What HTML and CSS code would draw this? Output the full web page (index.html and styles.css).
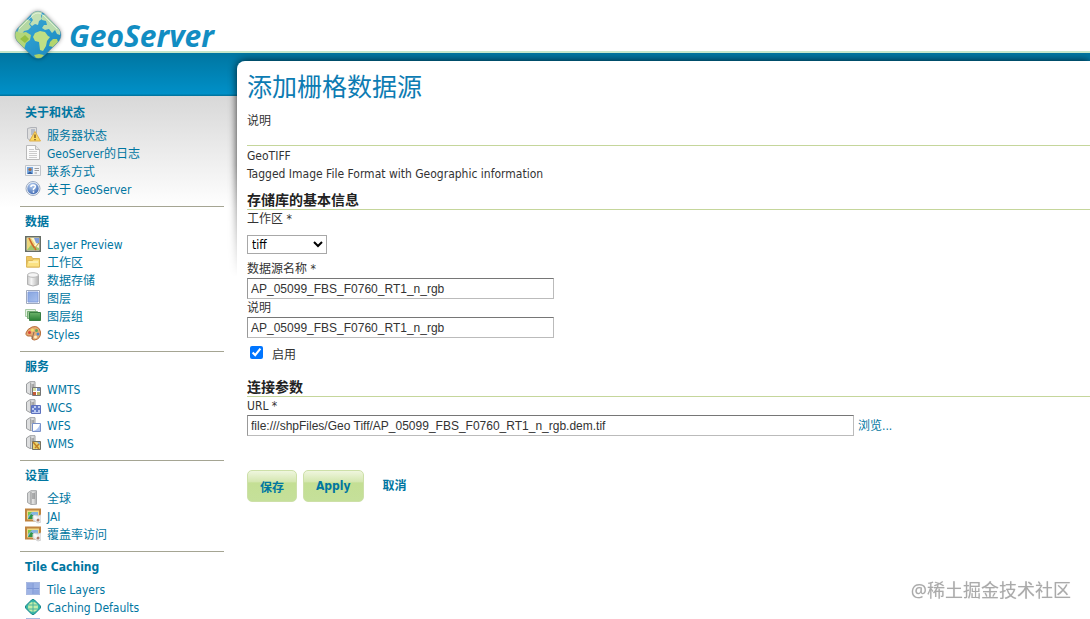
FILE: index.html
```html
<!DOCTYPE html>
<html lang="zh-CN">
<head>
<meta charset="utf-8">
<title>GeoServer</title>
<link rel="stylesheet" href="styles.css">
</head>
<body>
<svg class="sprite" aria-hidden="true">
  <defs>
    <linearGradient id="g-metal" x1="0" x2="1" y1="0" y2="0"><stop offset="0" stop-color="#8e9091"/><stop offset=".4" stop-color="#e9e9e9"/><stop offset="1" stop-color="#b4b5b6"/></linearGradient>
    <linearGradient id="g-cyl" x1="0" x2="1" y1="0" y2="0"><stop offset="0" stop-color="#c6c6c6"/><stop offset=".35" stop-color="#f6f6f6"/><stop offset="1" stop-color="#b2b2b2"/></linearGradient>
    <linearGradient id="g-blue" x1="0" x2="1" y1="0" y2="1"><stop offset="0" stop-color="#86a5e0"/><stop offset="1" stop-color="#a9c0ee"/></linearGradient>
    <linearGradient id="g-green" x1="0" x2="0" y1="0" y2="1"><stop offset="0" stop-color="#6db46b"/><stop offset="1" stop-color="#297f35"/></linearGradient>
    <linearGradient id="g-sea" x1="0" x2="1" y1="0" y2="1"><stop offset="0" stop-color="#53a9cc"/><stop offset=".5" stop-color="#2a9bcf"/><stop offset="1" stop-color="#1782b9"/></linearGradient>
    <radialGradient id="g-help" cx=".4" cy=".25" r=".8"><stop offset="0" stop-color="#b9d0f1"/><stop offset="1" stop-color="#3d68b1"/></radialGradient>
    <clipPath id="c-logo"><path d="M20 4.500Q26 0 32 4.500L47 20Q51 26 47 32L32 47Q26 52 20 47L5 32Q1 26 5 20Z"/></clipPath>
  </defs>
  <symbol id="i-server" viewBox="0 0 16 16"><path d="M2.500 3 6 .7h5.500v13.500L6 14.500l-3.500-2Z" fill="#d4d5d5" stroke="#a6a8aa"/><path d="M5.500 2 11 1.500v12.500l-5.500-.3Z" fill="url(#g-metal)"/><path d="M7 4h3M7 6h3M7 8h3" stroke="#77797b"/></symbol>
  <symbol id="i-status" viewBox="0 0 16 16"><path d="M2.500 1.500 6 .5h5.500v12l-6 1-3-2Z" fill="#dedede" stroke="#b0b2b8"/><path d="M6 3h4M6 5h4M6 7h4" stroke="#8a99b4"/><path d="m10 4.500 5.500 9.500h-11Z" fill="#fcd95f" stroke="#dfae4a"/><path d="M10 7.500v3.500M10 12v1.300" stroke="#704b1b" stroke-width="1.300"/></symbol>
  <symbol id="i-page" viewBox="0 0 16 16"><path d="M1.500.5h9l4 4v10h-13Z" fill="#fbfbfb" stroke="#b9b9b9"/><path d="M10.500.5v4h4" fill="#e5e5e5" stroke="#b9b9b9"/><path d="M4 4.500h5M4 6.500h8M4 8.500h8M4 10.500h8M4 12.500h8" stroke="#cbcbcb"/></symbol>
  <symbol id="i-card" viewBox="0 0 16 16"><path d="M.5 2.500h15v10H.5Z" fill="#f3f5f8" stroke="#c1c5ca"/><path d="M2 4h6v7H2Z" fill="#79a9df"/><circle cx="5" cy="6.500" r="1.600" fill="#a56b42"/><path d="M2.500 11q2.500-5 5 0Z" fill="#345f9e"/><path d="M9.500 5.500H14M9.500 7.500H14M9.500 10H12" stroke="#9a9da1"/></symbol>
  <symbol id="i-help" viewBox="0 0 16 16"><circle cx="8" cy="7.500" r="7" fill="#ecf1f8" stroke="#9eacc2"/><circle cx="8" cy="7.500" r="5.700" fill="url(#g-help)"/><path d="M5.900 6q0-2 2.200-2t2.200 1.800Q10.300 7 8.500 8v1.300M8.500 10.300v1.500" fill="none" stroke="#fff" stroke-width="1.500"/></symbol>
  <symbol id="i-map" viewBox="0 0 16 16"><path d="M.8.800h14.400v14.400H.8Z" fill="#fff7ca" stroke="#666d65" stroke-width="1.600"/><path d="M2 2h4l4 6-3 6H2Z" fill="#edd77c"/><path d="M9 2h5v6l-3-1Z" fill="#7e9ddb"/><path d="m2 14 4-5 8 3v2Z" fill="#9fc76a"/><path d="m4 2 3 6 4 6" fill="none" stroke="#cf6728" stroke-width="1.600"/><path d="m14 7-5 6" stroke="#be9742"/></symbol>
  <symbol id="i-folder" viewBox="0 0 16 16"><path d="M1.500 13V2.500h5l1 2h7V13Z" fill="#f0c65e" stroke="#d9b35a"/><path d="M1.500 13 2.500 6.500h5l1-1.500h6v8Z" fill="#fbe283" stroke="#ddb757"/><path d="M4 8h9" stroke="#fff9d9"/></symbol>
  <symbol id="i-db" viewBox="0 0 16 16"><path d="M2.500 3v9.500q5.500 3 11 0V3Z" fill="url(#g-cyl)" stroke="#b1b1b1"/><ellipse cx="8" cy="3" rx="5.500" ry="2.300" fill="#f5f5f5" stroke="#b9b9b9"/></symbol>
  <symbol id="i-layer" viewBox="0 0 16 16"><path d="M1.500.500h13v13h-13Z" fill="#fff" stroke="#9fa9bd"/><path d="M3 2h10v10H3Z" fill="url(#g-blue)" stroke="#819cdc"/></symbol>
  <symbol id="i-group" viewBox="0 0 16 16"><path d="M.5 1.500h10v7H.5Z" fill="#e2f0df" stroke="#a9cba6"/><path d="M2.500 3.500h10v7h-10Z" fill="#a0cb9c" stroke="#77ad75"/><path d="M4.500 4.500h11v8h-11Z" fill="url(#g-green)" stroke="#397e42"/></symbol>
  <symbol id="i-palette" viewBox="0 0 16 16"><path d="M7 1q7-2 8.500 5 .5 7-6 8-3 .2-2.500-2.500.5-2-2-1.500-4.500.5-4-3Q2 3 7 1Z" fill="#e5aa71" stroke="#b76d3a"/><circle cx="4.500" cy="6.500" r="1.500" fill="#d94637"/><circle cx="7.500" cy="4" r="1.500" fill="#f7e06b"/><circle cx="11.500" cy="4.500" r="1.500" fill="#65ad59"/><circle cx="13" cy="8" r="1.500" fill="#4d87cd"/><circle cx="10.500" cy="11" r="1.500" fill="#fff0c4"/><path d="m7 13 2-7" stroke="#8b6d59"/></symbol>
  <symbol id="i-svc" viewBox="0 0 16 16"><path d="M1.500 3 5 .7h5V13.500H5l-3.500-2Z" fill="#dedfe0" stroke="#9b9d9f"/><path d="M5 1.500h5v12H5Z" fill="url(#g-metal)"/><path d="M6.500 4H9M6.500 6H9" stroke="#777"/></symbol>
  <symbol id="i-wmts" viewBox="0 0 16 16"><use href="#i-svc"/><path d="M7.500 6.500h8v8h-8Z" fill="#fff" stroke="#757575"/><path d="M8 7h3v3H8Z" fill="#d4dfa4"/><path d="M12 7h3v3h-3Z" fill="#789ace"/><path d="M8 11h3v3H8Z" fill="#c45a36"/><path d="M12 11h3v3h-3Z" fill="#b8b466"/></symbol>
  <symbol id="i-wcs" viewBox="0 0 16 16"><use href="#i-svc"/><path d="M6.500 6.500h9v8h-9Z" fill="#bccbf1" stroke="#5d71be"/><path d="M7 7h2v2h2V7h2v2h2v2h-2v2h-2v-2H9v2H7v-2h2V9H7Z" fill="#637bc9"/></symbol>
  <symbol id="i-wfs" viewBox="0 0 16 16"><use href="#i-svc"/><path d="M7.500 6.500h8v8h-8Z" fill="#fff" stroke="#7990c8"/><path d="M8 14q5-1 7-7v7Z" fill="#adc3ef"/></symbol>
  <symbol id="i-wms" viewBox="0 0 16 16"><use href="#i-svc"/><path d="M7.500 6.500h8v8h-8Z" fill="#ecd574" stroke="#727165"/><path d="m8 7 6 7M15 8l-5 5" stroke="#c18224" stroke-width="1.500"/><path d="M12 7h3v3Z" fill="#86a9d8"/></symbol>
  <symbol id="i-jai" viewBox="0 0 16 16"><path d="M1 1.500h14v11H1Z" fill="#efd985" stroke="#c08440" stroke-width="2"/><path d="M3 4h10v7H3Z" fill="#86b6df"/><path d="m3 11 3-5 3 2 4 3Z" fill="#319549"/><path d="M3 4h4L3 8Z" fill="#78c84b"/><path d="m8 8 3-1 2 1 3-1v7l-3 1-5-3Z" fill="#eee" stroke="#d0d0d0"/><circle cx="13" cy="12" r="1.500" fill="#ad7966"/><path d="m9 8 3 3" stroke="#f8f8f8" stroke-width="2"/></symbol>
  <symbol id="i-tiles" viewBox="0 0 16 16"><path d="M1 1h14v13H1Z" fill="#9fb4e5"/><path d="M1 1h6v6H1ZM9 9h6v5H9Z" fill="#93aae0"/><path d="M8 1v13M1 7.500h14" stroke="#7c95d3"/><path d="M1.500 1.500h13v12h-13Z" fill="none" stroke="#a9b9e1"/></symbol>
  <symbol id="i-cache" viewBox="0 0 16 16"><path d="M6.500 1Q8-.3 9.500 1L15 6.500Q16.300 8 15 9.500L9.500 15Q8 16.300 6.500 15L1 9.500Q-.3 8 1 6.500Z" fill="#39b7a5" stroke="#15858c"/><circle cx="8" cy="8" r="5" fill="#c5edaa"/><path d="M8 3v10M3.500 6h9M3.500 10h9" stroke="#4bb29b"/></symbol>
</svg>

<header class="header">
  <a class="brand" href="#">
    <svg class="brand-mark" viewBox="0 0 52 52" aria-hidden="true">
      <g clip-path="url(#c-logo)">
        <path d="M0 0h52v52H0Z" fill="url(#g-sea)"/>
        <path d="m20 3 5-2 5 2-1 4 1 3-3 2-1 4-3-1-3 2-2-2 3-4-2-3Z" fill="#c3e0b4"/>
        <path d="m9 13 5-3 5 2-2 3 2 3-3 3-4 1-2 3-5-1Z" fill="#b5d8a2"/>
        <path d="m3 22 6 2 5-1 5 3-1 5-4 3-2 6L2 29Z" fill="#b3d67a"/>
        <path d="m8 30 5-4 4 4-4 4Z" fill="#94c043"/>
        <path d="m30 6 5-1 14 15-1 6-3-1-2-4-3 3-3-4-4 1-3-2 2-3 3 0-1-4-4-1Z" fill="#b9dcae"/>
        <path d="m23 24 5-2 5 1 3 4 2 1-3 4-1 5-3 5-3-1-1-8-4-1-2-4Z" fill="#bfdf85"/>
        <path d="m38 33 3-3 4 0 1 3-5 5-4-1Z" fill="#b3d56f"/>
        <path d="m22 46 5-1 5 1-3 4-5-1Z" fill="#abd067"/>
      </g>
      <path d="M20 4.500Q26 0 32 4.500L47 20Q51 26 47 32L32 47Q26 52 20 47L5 32Q1 26 5 20Z" fill="none" stroke="#426f7d" stroke-opacity=".25"/>
      <path d="M7 20 21 6q5-4 10 0l14 14" fill="none" stroke="#fff" stroke-opacity=".5"/>
    </svg>
    <span class="brand-name">GeoServer</span>
  </a>
</header>

<div class="layout">
  <nav class="sidebar">
    <section class="group">
      <h3>关于和状态</h3>
      <ul>
        <li><a href="#"><svg><use href="#i-status"/></svg>服务器状态</a></li>
        <li><a href="#"><svg><use href="#i-page"/></svg>GeoServer的日志</a></li>
        <li><a href="#"><svg><use href="#i-card"/></svg>联系方式</a></li>
        <li><a href="#"><svg><use href="#i-help"/></svg>关于 GeoServer</a></li>
      </ul>
    </section>
    <section class="group">
      <h3>数据</h3>
      <ul>
        <li><a href="#"><svg><use href="#i-map"/></svg>Layer Preview</a></li>
        <li><a href="#"><svg><use href="#i-folder"/></svg>工作区</a></li>
        <li><a href="#"><svg><use href="#i-db"/></svg>数据存储</a></li>
        <li><a href="#"><svg><use href="#i-layer"/></svg>图层</a></li>
        <li><a href="#"><svg><use href="#i-group"/></svg>图层组</a></li>
        <li><a href="#"><svg><use href="#i-palette"/></svg>Styles</a></li>
      </ul>
    </section>
    <section class="group">
      <h3>服务</h3>
      <ul>
        <li><a href="#"><svg><use href="#i-wmts"/></svg>WMTS</a></li>
        <li><a href="#"><svg><use href="#i-wcs"/></svg>WCS</a></li>
        <li><a href="#"><svg><use href="#i-wfs"/></svg>WFS</a></li>
        <li><a href="#"><svg><use href="#i-wms"/></svg>WMS</a></li>
      </ul>
    </section>
    <section class="group">
      <h3>设置</h3>
      <ul>
        <li><a href="#"><svg><use href="#i-server"/></svg>全球</a></li>
        <li><a href="#"><svg><use href="#i-jai"/></svg>JAI</a></li>
        <li><a href="#"><svg><use href="#i-jai"/></svg>覆盖率访问</a></li>
      </ul>
    </section>
    <section class="group">
      <h3>Tile Caching</h3>
      <ul>
        <li><a href="#"><svg><use href="#i-tiles"/></svg>Tile Layers</a></li>
        <li><a href="#"><svg><use href="#i-cache"/></svg>Caching Defaults</a></li>
        <li><a href="#"><svg><use href="#i-tiles"/></svg></a></li>
      </ul>
    </section>
  </nav>

  <main class="main">
    <div class="shade" aria-hidden="true"><div class="shade-edge"></div></div>
    <div class="content">
      <div class="page-header">
        <h1>添加栅格数据源</h1>
        <p>说明</p>
      </div>
      <p>GeoTIFF</p>
      <p>Tagged Image File Format with Geographic information</p>
      <form>
        <h2>存储库的基本信息</h2>
        <label class="caption" for="workspace">工作区 *</label>
        <select id="workspace" class="workspace"><option>tiff</option></select>
        <label class="caption" for="name">数据源名称 *</label>
        <input id="name" class="text" type="text" value="AP_05099_FBS_F0760_RT1_n_rgb">
        <label class="caption" for="description">说明</label>
        <input id="description" class="text" type="text" value="AP_05099_FBS_F0760_RT1_n_rgb">
        <div class="check"><input id="enabled" type="checkbox" checked><label for="enabled">启用</label></div>
        <h2>连接参数</h2>
        <label class="caption" for="url">URL *</label>
        <div class="url-row">
          <input id="url" class="text text-wide" type="text" value="file:///shpFiles/Geo Tiff/AP_05099_FBS_F0760_RT1_n_rgb.dem.tif">
          <a href="#">浏览...</a>
        </div>
        <div class="actions">
          <button class="button" type="button">保存</button>
          <button class="button" type="button">Apply</button>
          <a class="cancel" href="#">取消</a>
        </div>
      </form>
    </div>
  </main>
</div>
<div class="watermark">@稀土掘金技术社区</div>
</body>
</html>
```
FILE: styles.css
```css
* { box-sizing: border-box; }

body {
  margin: 0;
  height: 100vh;
  overflow: hidden;
  display: flex;
  flex-direction: column;
  background: #fff;
  color: #333;
  font: 12px/18px "DejaVu Sans Condensed", "Open Sans", "Noto Sans CJK SC", sans-serif;
}

h1, h2, h3, p, ul { margin: 0; padding: 0; }
ul { list-style: none; }
a { color: #0076a1; text-decoration: none; }

.sprite { position: absolute; width: 0; height: 0; }

.header {
  height: 53px;
  flex: none;
  padding: 9px 12px 0;
  border-bottom: 2px solid #c5e6c9;
  position: relative;
  z-index: 1;
}
.brand { display: flex; gap: 5px; width: max-content; }
.brand-mark { width: 52px; height: 52px; filter: drop-shadow(0 0 2px rgba(0, 0, 0, .4)); }
.brand-name {
  color: #128dc2;
  font: italic 700 30px/54px "Noto Sans", sans-serif;
}

.layout {
  flex: 1 0 auto;
  display: grid;
  grid-template-columns: 237px minmax(0, 1fr);
  background: linear-gradient(#0076a1, #0090c8 41px, #0076a1 42px) 0 0 / 100% 43px no-repeat;
}

.sidebar {
  margin-top: 43px;
  padding: 2px 13px 0 20px;
  background: linear-gradient(#d8d8d8, #fff 112px);
}
.group { padding: 6px 5px 7px; border-bottom: 1px solid #a5a593; }
.group h3 { margin-bottom: 5px; color: #0076a1; font-size: 12px; line-height: 18px; }
.group a { display: flex; gap: 6px; height: 18px; }
.group svg { width: 16px; height: 16px; flex: none; }

.main {
  margin-top: 8px;
  position: relative;
  z-index: 0;
}
.shade {
  position: absolute;
  z-index: -1;
  inset: -8px 0 auto -14px;
  height: 224px;
  padding: 8px 0 0 14px;
  overflow: hidden;
  mask-image: linear-gradient(#000 50%, transparent);
}
.shade-edge { height: 240px; border-radius: 8px 0 0 0; box-shadow: 0 0 9px rgba(0, 0, 0, .8); }

.content {
  height: 100%;
  padding: 11px 0 0 10px;
  background: #fff;
  border-radius: 8px 0 0 0;
}
.page-header { height: 74px; margin-bottom: 1px; border-bottom: 1px solid #c5d69b; }
.page-header h1 { margin-bottom: 8px; color: #0d7cb3; font-size: 25px; font-weight: 400; line-height: 32px; }

form { display: flex; flex-direction: column; align-items: flex-start; }
h2 {
  align-self: stretch;
  margin-top: 8px;
  border-bottom: 1px solid #c5d69b;
  color: #222;
  font-size: 14px;
  line-height: 18px;
}
.caption { line-height: 18px; }
.workspace {
  width: 80px;
  height: 19px;
  margin: 7px 0 6px;
  padding: 0;
  border: 1px solid #a8a8a8;
  border-radius: 0;
  background: #fff;
  color: #000;
  font: 12px "DejaVu Sans Condensed", "Open Sans", sans-serif;
}
.text {
  width: 307px;
  height: 21px;
  padding: 1px 3px;
  border: 1px solid #bbb;
  border-top-color: #767676;
  border-left-color: #999;
  color: #333;
  font: 12px "Liberation Sans", sans-serif;
}
.check { display: flex; gap: 9px; margin: 8px 0 6px; }
.check input { width: 13px; height: 13px; margin: 0 0 0 3px; }
.url-row { display: flex; align-items: center; gap: 4px; align-self: stretch; }
.text-wide { flex: 0 1 607px; }

.actions { display: flex; align-items: center; gap: 6px; margin-top: 34px; }
.button {
  height: 32px;
  padding: 0 12px;
  border: 1px solid #cde0a8;
  border-radius: 5px;
  background: linear-gradient(#eff6de, #d5e7b1 35%, #c4df94 40%, #c5e09a);
  color: #0076a1;
  font: 700 12px "DejaVu Sans Condensed", "Open Sans", "Noto Sans CJK SC", sans-serif;
}
.cancel { padding-left: 13px; font-weight: 700; }

.watermark {
  position: fixed;
  right: 19px;
  bottom: 16px;
  color: #aaa;
  font: 18px/26px "Noto Sans", "Noto Sans CJK SC", sans-serif;
  text-shadow: 0 0 1px #ddd;
}
```
